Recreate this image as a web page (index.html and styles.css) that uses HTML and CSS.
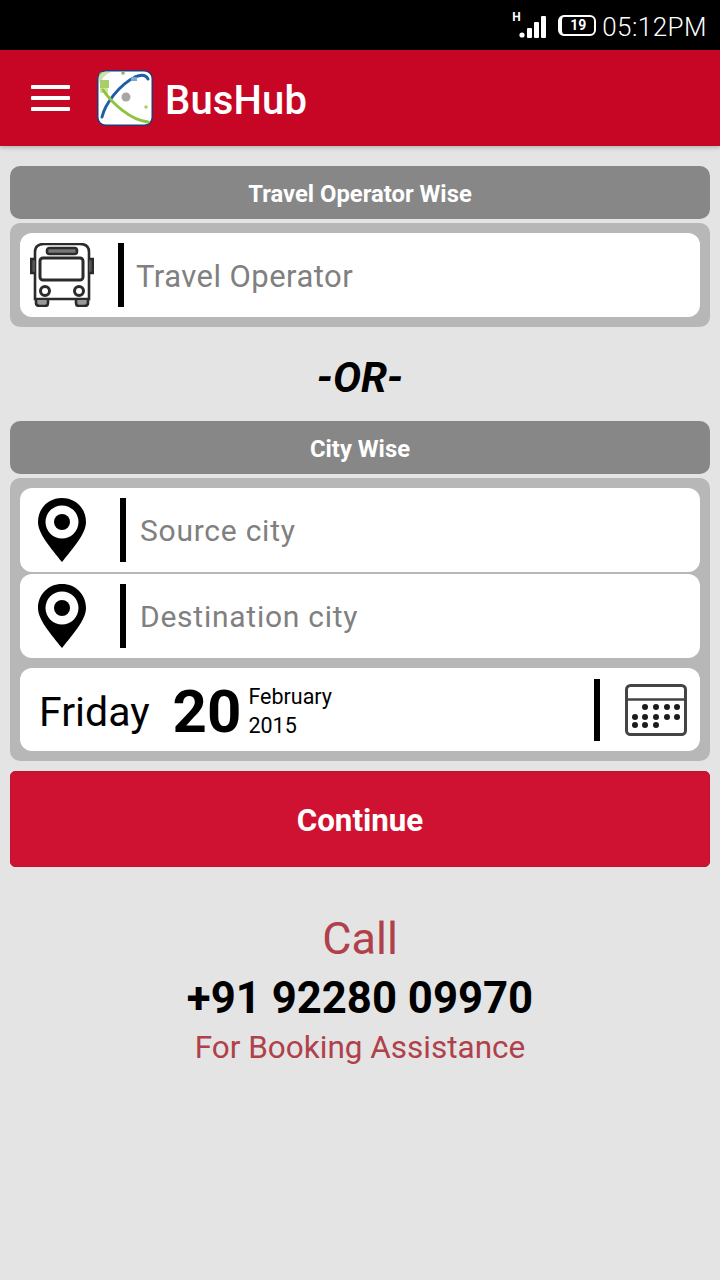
FILE: index.html
```html
<!DOCTYPE html>
<html lang="en">
<head>
    <meta charset="UTF-8">
    <meta name="viewport" content="width=device-width, initial-scale=1.0">
    <title>BusHub</title>
    <link rel="stylesheet" href="styles.css">
</head>
<body>
    <div class="status-bar">
        <div class="signal">
            <span class="signal-h">H</span>
            <svg width="28" height="24" viewBox="0 0 28 24">
                <circle cx="3" cy="20" r="2.6" fill="#fff"/>
                <rect x="8" y="13" width="5" height="10" rx="1" fill="#fff"/>
                <rect x="15" y="7" width="5" height="16" rx="1" fill="#fff"/>
                <rect x="22" y="1" width="5" height="22" rx="1" fill="#fff"/>
            </svg>
        </div>
        <div class="battery"><span>19</span></div>
        <div class="clock">05:12PM</div>
    </div>

    <header class="app-header">
        <div class="menu-icon"><i></i><i></i><i></i></div>
        <svg class="logo" width="56" height="56" viewBox="0 0 56 56">
            <rect x="0.750" y="0.750" width="54.500" height="54.500" rx="8" fill="#fff" stroke="#243a78" stroke-width="1.500"/>
            <path d="M2 10 L2 5 Q2 2 5 2 L14 2 Q6 5 3 14 Z" fill="#a9cf6b" opacity="0.6"/>
            <rect x="3" y="10" width="9" height="8" fill="#a9cf6b"/>
            <rect x="3" y="18" width="8" height="5" fill="#cfe4a6"/>
            <path d="M5 47 C8 34 22 15 38 7 C45 4 49 5 51 9" fill="none" stroke="#1d5fa6" stroke-width="3" stroke-linecap="round"/>
            <path d="M6 20 C15 33 33 50 51 52" fill="none" stroke="#8fc23f" stroke-width="3" stroke-linecap="round"/>
            <circle cx="29" cy="27" r="4.500" fill="#a6a6a6"/>
            <circle cx="26" cy="3" r="1.800" fill="#8fb060"/>
            <circle cx="49" cy="37" r="1.800" fill="#a9cf6b"/>
            <rect x="34" y="7" width="6" height="4" fill="#7fa6cf"/>
        </svg>
        <div class="app-title">BusHub</div>
    </header>

    <div class="content">
        <div class="section-bar">Travel Operator Wise</div>
        <div class="panel">
            <div class="row">
                <svg class="bus-icon" width="64" height="64" viewBox="0 0 64 64" fill="none" stroke="#2b2b2b" stroke-width="2.600">
                    <path d="M5 9 C5 3 9 1 14 1 H50 C55 1 59 3 59 9 V56 H5 Z"/>
                    <rect x="17" y="5" width="30" height="6" rx="2.500" fill="#777"/>
                    <rect x="10" y="15" width="43" height="22" rx="3" stroke-width="3"/>
                    <path d="M5 16 H1 V30 H5 M59 16 H63 V30 H59" fill="#555"/>
                    <circle cx="15" cy="48" r="4.500" stroke-width="3"/>
                    <circle cx="49" cy="48" r="4.500" stroke-width="3"/>
                    <path d="M6 57 V60 C6 62 8 63 10 63 H15 C17 63 18 62 18 60 V57 M46 57 V60 C46 62 47 63 49 63 H54 C56 63 58 62 58 60 V57" fill="#999"/>
                </svg>
                <div class="divider divider-bus"></div>
                <div class="field field-bus">Travel Operator</div>
            </div>
        </div>

        <div class="or-text">-OR-</div>

        <div class="section-bar">City Wise</div>
        <div class="panel">
            <div class="row">
                <svg class="pin-icon" width="50" height="64" viewBox="0 0 50 64">
                    <path fill-rule="evenodd" fill="#000" d="M25 0 C38.800 0 49 10.500 49 24 C49 36 36 50 25 64 C14 50 1 36 1 24 C1 10.500 11.200 0 25 0 Z M25 7.500 A16.500 16.500 0 1 0 25 40.500 A16.500 16.500 0 1 0 25 7.500 Z"/>
                    <circle cx="25" cy="24" r="8" fill="#000"/>
                </svg>
                <div class="divider"></div>
                <div class="field">Source city</div>
            </div>
            <div class="row row-second">
                <svg class="pin-icon" width="50" height="64" viewBox="0 0 50 64">
                    <path fill-rule="evenodd" fill="#000" d="M25 0 C38.800 0 49 10.500 49 24 C49 36 36 50 25 64 C14 50 1 36 1 24 C1 10.500 11.200 0 25 0 Z M25 7.500 A16.500 16.500 0 1 0 25 40.500 A16.500 16.500 0 1 0 25 7.500 Z"/>
                    <circle cx="25" cy="24" r="8" fill="#000"/>
                </svg>
                <div class="divider"></div>
                <div class="field">Destination city</div>
            </div>
            <div class="row row-date">
                <div class="day-name">Friday</div>
                <div class="day-num">20</div>
                <div class="month-year">
                    <div>February</div>
                    <div>2015</div>
                </div>
                <div class="divider divider-date"></div>
                <svg class="cal-icon" width="62" height="52" viewBox="0 0 62 52">
                    <rect x="1.500" y="1.500" width="59" height="49" rx="4" fill="none" stroke="#444" stroke-width="3"/>
                    <path d="M1 15.500 H61" stroke="#444" stroke-width="2.600"/>
                    <g fill="#1c1c1c">
                        <circle cx="20" cy="23" r="3"/><circle cx="31" cy="23" r="3"/><circle cx="42" cy="23" r="3"/><circle cx="52" cy="23" r="3"/>
                        <circle cx="10" cy="33" r="3"/><circle cx="20" cy="33" r="3"/><circle cx="31" cy="33" r="3"/><circle cx="42" cy="33" r="3"/><circle cx="52" cy="33" r="3"/>
                        <circle cx="10" cy="41" r="3"/><circle cx="20" cy="41" r="3"/><circle cx="31" cy="41" r="3"/>
                    </g>
                </svg>
            </div>
        </div>

        <div class="continue-btn">Continue</div>

        <div class="call-box">
            <div class="call-label">Call</div>
            <div class="call-number">+91 92280 09970</div>
            <div class="call-note">For Booking Assistance</div>
        </div>
    </div>
</body>
</html>
```

FILE: styles.css
```css
* {
    box-sizing: border-box;
}
body {
    margin: 0;
    height: 1280px;
    overflow: hidden;
    font-family: Roboto, "Noto Sans", sans-serif;
    background-color: #e4e4e4;
}
.status-bar {
    height: 50px;
    background-color: #000;
    color: #fff;
    display: flex;
    align-items: center;
    justify-content: flex-end;
    padding-right: 13px;
}
.signal {
    position: relative;
    width: 28px;
    height: 24px;
    margin-top: 4px;
    margin-right: 11px;
}
.signal svg {
    display: block;
}
.signal-h {
    position: absolute;
    left: -7px;
    top: -4px;
    font-size: 12px;
    font-weight: 700;
    line-height: 12px;
}
.battery {
    width: 38px;
    height: 21px;
    border: 2.5px solid #fff;
    border-left-width: 4px;
    border-radius: 6px;
    margin-right: 6px;
    text-align: center;
    font-size: 14px;
    font-weight: 700;
    line-height: 16px;
}
.clock {
    font-size: 26px;
    font-weight: 300;
    letter-spacing: 0.45px;
    padding-top: 4px;
}
.app-header {
    height: 96px;
    background-color: #c70625;
    display: flex;
    align-items: center;
    padding-left: 31px;
    box-shadow: 0 2px 4px rgba(0, 0, 0, 0.2);
}
.menu-icon {
    width: 39px;
    margin-right: 27px;
    display: flex;
    flex-direction: column;
    gap: 7px;
}
.menu-icon i {
    display: block;
    height: 4px;
    background-color: #fff;
    border-radius: 1px;
}
.logo {
    margin-right: 12px;
}
.app-title {
    color: #fff;
    font-size: 40px;
    font-weight: 500;
    letter-spacing: 0.15px;
    padding-top: 4px;
}
.content {
    padding: 20px 10px 0;
}
.section-bar {
    height: 53px;
    background-color: #878787;
    border-radius: 10px;
    color: #fff;
    font-size: 23.800px;
    font-weight: 700;
    padding-top: 3px;
    display: flex;
    align-items: center;
    justify-content: center;
    margin-bottom: 4px;
}
.panel {
    background-color: #b7b7b7;
    border-radius: 10px;
    padding: 10px;
}
.row {
    height: 84px;
    background-color: #fff;
    border-radius: 12px;
    display: flex;
    align-items: center;
}
.row-second {
    margin-top: 2px;
}
.row-date {
    height: 83px;
    margin-top: 10px;
}
.bus-icon {
    margin-left: 10px;
}
.pin-icon {
    margin-left: 17px;
}
.divider {
    width: 6px;
    height: 64px;
    background-color: #000;
    margin-left: 33px;
}
.divider-bus {
    margin-left: 24px;
}
.field {
    color: #808080;
    font-size: 30px;
    margin-left: 14px;
    padding-top: 1px;
    letter-spacing: 0.75px;
}
.field-bus {
    font-size: 31px;
    margin-left: 12px;
    padding-top: 2px;
    letter-spacing: 0.45px;
}
.or-text {
    height: 94px;
    padding-top: 6px;
    display: flex;
    align-items: center;
    justify-content: center;
    font-size: 42px;
    font-weight: 700;
    font-style: italic;
    color: #000;
}
.day-name {
    font-size: 41px;
    margin-left: 19px;
    padding-top: 5px;
}
.day-num {
    font-size: 60px;
    font-weight: 700;
    margin-left: 23px;
    padding-top: 4px;
}
.month-year {
    font-size: 21.500px;
    line-height: 29px;
    margin-left: 7px;
    padding-top: 2px;
}
.divider-date {
    height: 62px;
    margin-left: auto;
}
.cal-icon {
    margin-left: 25px;
    margin-right: 13px;
}
.continue-btn {
    height: 96px;
    margin-top: 10px;
    background-color: #cf1231;
    border: 1px solid #b91431;
    border-radius: 5px;
    color: #fff;
    font-size: 31.300px;
    font-weight: 700;
    padding-top: 2px;
    display: flex;
    align-items: center;
    justify-content: center;
}
.call-box {
    margin-top: 44px;
    text-align: center;
}
.call-label {
    font-size: 45px;
    line-height: 55px;
    color: #b0404a;
}
.call-number {
    font-size: 43.700px;
    line-height: 62px;
    font-weight: 700;
    color: #000;
    margin-top: 1px;
}
.call-note {
    font-size: 31.500px;
    line-height: 38px;
    color: #b0404a;
}
```
